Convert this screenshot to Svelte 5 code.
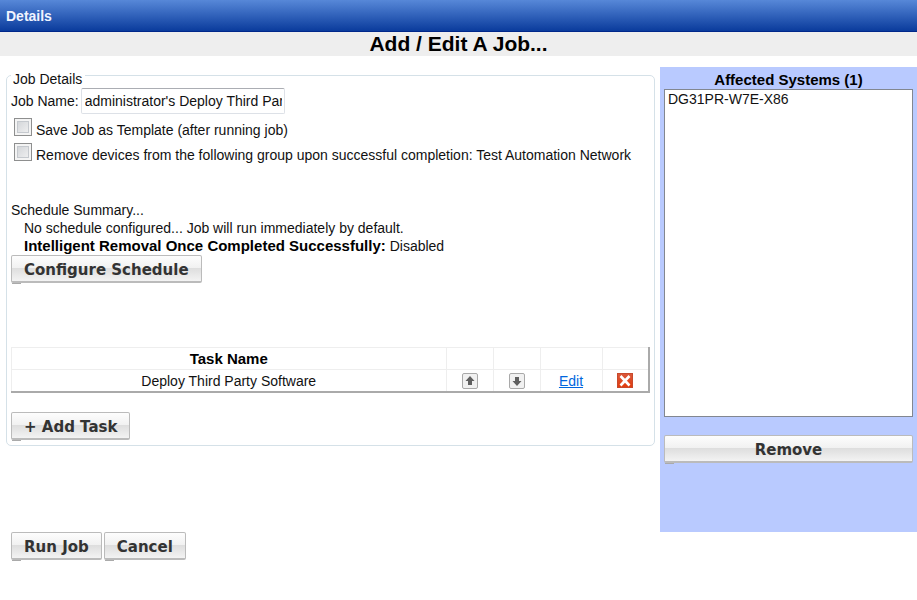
<script lang="ts">
    interface Task {
        id: number;
        name: string;
    }

    let jobName = $state("administrator's Deploy Third Party Software");
    let saveAsTemplate = $state(false);
    let removeDevices = $state(false);
    let tasks = $state<Task[]>([{ id: 1, name: 'Deploy Third Party Software' }]);
    let systems = $state(['DG31PR-W7E-X86']);
    let selected = $state<string[]>([]);

    const group = 'Test Automation Network';

    function moveTask(index: number, step: number) {
        const target = index + step;
        if (target < 0 || target >= tasks.length) return;
        const task = tasks[index];
        tasks[index] = tasks[target];
        tasks[target] = task;
    }

    function addTask() {
        tasks.push({ id: Date.now(), name: 'New Task' });
    }

    function removeTask(id: number) {
        tasks = tasks.filter((t) => t.id !== id);
    }

    function removeSystems() {
        systems = systems.filter((s) => !selected.includes(s));
        selected = [];
    }
</script>

<header class="titlebar">Details</header>
<h1>Add / Edit A Job...</h1>

<main>
    <div class="columns">
        <fieldset class="job">
            <legend>Job Details</legend>

            <div class="name-row">
                <label for="job-name">Job Name:</label>
                <input id="job-name" type="text" bind:value={jobName} />
            </div>
            <label class="check">
                <input type="checkbox" bind:checked={saveAsTemplate} />
                <span>Save Job as Template (after running job)</span>
            </label>
            <label class="check">
                <input type="checkbox" bind:checked={removeDevices} />
                <span>Remove devices from the following group upon successful completion: {group}</span>
            </label>

            <section class="schedule">
                <div>Schedule Summary...</div>
                <div class="indent">No schedule configured... Job will run immediately by default.</div>
                <div class="indent"><b>Intelligent Removal Once Completed Successfully:</b> Disabled</div>
                <button type="button" class="btn">Configure Schedule</button>
            </section>

            <table>
                <thead>
                    <tr>
                        <th>Task Name</th>
                        <th class="move"></th>
                        <th class="move"></th>
                        <th class="edit"></th>
                        <th class="delete"></th>
                    </tr>
                </thead>
                <tbody>
                    {#each tasks as task, i (task.id)}
                        <tr>
                            <td>{task.name}</td>
                            <td>
                                <button type="button" class="icon" aria-label="Move up" onclick={() => moveTask(i, -1)}>
                                    <svg width="16" height="16" viewBox="0 0 16 16">
                                        <rect x="0.5" y="0.5" width="15" height="15" rx="1.5" fill="#f1f1f1" stroke="#a9a9a9" />
                                        <path d="M8 3L12.5 8H10V12H6V8H3.5Z" fill="#606060" />
                                    </svg>
                                </button>
                            </td>
                            <td>
                                <button type="button" class="icon" aria-label="Move down" onclick={() => moveTask(i, 1)}>
                                    <svg width="16" height="16" viewBox="0 0 16 16">
                                        <rect x="0.5" y="0.5" width="15" height="15" rx="1.5" fill="#f1f1f1" stroke="#a9a9a9" />
                                        <path d="M8 13L12.5 8H10V4H6V8H3.5Z" fill="#606060" />
                                    </svg>
                                </button>
                            </td>
                            <td><a href="#edit">Edit</a></td>
                            <td>
                                <button type="button" class="icon" aria-label="Delete" onclick={() => removeTask(task.id)}>
                                    <svg width="16" height="16" viewBox="0 0 16 16">
                                        <defs>
                                            <linearGradient id="del" x1="0" y1="0" x2="0" y2="1">
                                                <stop offset="0" stop-color="#d9583c" />
                                                <stop offset="1" stop-color="#e23c0c" />
                                            </linearGradient>
                                        </defs>
                                        <rect x="0.5" y="0.5" width="15" height="14" fill="url(#del)" stroke="#c8492c" />
                                        <path d="M3.5 3L12.5 12.5M12.5 3L3.5 12.5" stroke="#fff" stroke-width="2.6" />
                                    </svg>
                                </button>
                            </td>
                        </tr>
                    {/each}
                </tbody>
            </table>

            <button type="button" class="btn" onclick={addTask}>+ Add Task</button>
        </fieldset>

        <aside>
            <label for="systems">Affected Systems ({systems.length})</label>
            <select id="systems" multiple size="18" bind:value={selected}>
                {#each systems as system}
                    <option value={system}>{system}</option>
                {/each}
            </select>
            <button type="button" class="btn" onclick={removeSystems}>Remove</button>
        </aside>
    </div>

    <footer>
        <button type="button" class="btn">Run Job</button>
        <button type="button" class="btn">Cancel</button>
    </footer>
</main>

<style>
    :global(body) {
        background: #fff;
        color: #111;
        font-family: 'Liberation Sans', Arial, sans-serif;
        font-size: 14px;
        line-height: 18px;
    }

    .titlebar {
        height: 32px;
        box-sizing: border-box;
        padding-left: 6px;
        border-bottom: 1px solid #00278a;
        background: linear-gradient(#5788d8, #0a3b9c);
        color: #f0f4ff;
        font-weight: bold;
        line-height: 32px;
    }

    h1 {
        margin: 0;
        background: #eee;
        color: #000;
        font-size: 21px;
        line-height: 24px;
        text-align: center;
    }

    .columns {
        display: grid;
        grid-template-columns: minmax(0, 1fr) 257px;
        gap: 5px;
        margin-top: 11px;
        padding-left: 6px;
    }

    .job {
        align-self: start;
        box-sizing: border-box;
        min-width: 0;
        margin: -4px 0 0;
        padding: 0 4px 5px;
        border: 1px solid #d5e1e8;
        border-radius: 5px;
        white-space: nowrap;
    }

    legend {
        padding: 8px 3px 0 2px;
        line-height: 16px;
    }

    .name-row {
        display: flex;
        align-items: center;
        gap: 2px;
        margin-top: 1px;
    }

    .name-row input {
        width: 204px;
        height: 26px;
        box-sizing: border-box;
        padding: 0 2px 0 3px;
        border: 1px solid #dde1e7;
        border-top-color: #abadb3;
        border-radius: 2px;
        color: #111;
        font: inherit;
    }

    .check {
        display: flex;
        align-items: flex-start;
        gap: 4px;
        height: 25px;
        padding-left: 3px;
        line-height: 24px;
    }

    .name-row + .check {
        margin-top: 4px;
    }

    .check input {
        appearance: none;
        flex: none;
        width: 18px;
        height: 18px;
        margin: 0;
        border: 1px solid #8e8f8f;
        background: linear-gradient(135deg, #cdd0d4, #f5f5f5);
        box-shadow: inset 0 0 0 2px #f4f4f4, inset 0 0 0 3px #c5c9ce;
    }

    .check input:checked {
        background: #3d5f9c;
    }

    .schedule {
        margin-top: 33px;
    }

    .indent {
        padding-left: 13px;
    }

    b,
    th,
    aside label {
        color: #000;
        font-size: 15px;
        font-weight: bold;
    }

    .btn {
        position: relative;
        display: block;
        height: 28px;
        box-sizing: border-box;
        padding: 3px 12px 0;
        border: 1px solid #bbb;
        border-bottom: 2px solid #bbb;
        border-radius: 2px;
        background: linear-gradient(#fdfdfd, #f1f1f1 48%, #dedede 50%, #f3f3f3);
        color: #333;
        font: bold 15px 'DejaVu Sans', Verdana, sans-serif;
        cursor: pointer;
    }

    /* darker notch under the left corner */
    .btn::after {
        content: '';
        position: absolute;
        left: 0;
        bottom: -3px;
        width: 9px;
        height: 1px;
        background: #aaa;
    }

    table {
        width: 100%;
        margin: 64px 0 19px;
        border-collapse: collapse;
        border: 1px solid #eee;
        border-right: 2px solid #aaa;
        border-bottom: 2px solid #aaa;
        text-align: center;
        table-layout: fixed;
    }

    th,
    td {
        height: 22px;
        box-sizing: border-box;
        padding: 0;
        border-top: 1px solid #eee;
        border-left: 1px solid #eee;
    }

    td {
        padding-top: 1px;
    }

    .move {
        width: 47px;
    }

    .edit {
        width: 62px;
    }

    .delete {
        width: 47px;
    }

    .icon {
        display: block;
        margin: 0 auto;
        padding: 0;
        border: 0;
        background: none;
        cursor: pointer;
    }

    .icon svg {
        display: block;
    }

    a {
        color: #0066dd;
    }

    aside {
        display: flex;
        flex-direction: column;
        box-sizing: border-box;
        padding: 4px 4px 69px;
        background: #b9caff;
    }

    aside label {
        text-align: center;
    }

    select {
        height: 328px;
        box-sizing: border-box;
        margin-bottom: 18px;
        padding: 0;
        border: 1px solid #828790;
        border-radius: 0;
        background: #fff;
        color: #111;
        font: inherit;
    }

    option {
        min-height: 18px;
        padding: 1px 3px;
    }

    footer {
        display: flex;
        gap: 2px;
        padding: 0 11px 8px;
    }
</style>
